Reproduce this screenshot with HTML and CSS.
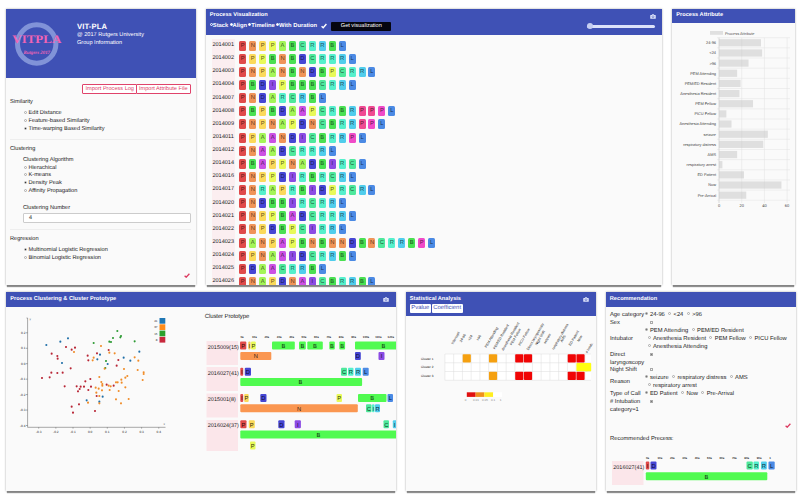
FILE: index.html
```html
<!DOCTYPE html>
<html lang="en">
<head>
<meta charset="utf-8">
<title>VIT-PLA</title>
<link rel="stylesheet" href="styles.css">
</head>
<body>
<main class="page">
  <div class="row row-top">
    <section class="card">
      <header class="brand">
        <svg class="logo" width="54" height="50" viewBox="10 19 54 50">
          <circle cx="36.7" cy="44" r="19.2" fill="none" stroke="#8193d8" stroke-width="5"/>
          <text class="logo-name" x="12.3" y="42.6" textLength="49" lengthAdjust="spacingAndGlyphs">VITPLA</text>
          <text class="logo-sub" x="23.5" y="54" textLength="26.5" lengthAdjust="spacingAndGlyphs">Rutgers 2017</text>
        </svg>
        <div class="brand-text">
          <h1>VIT-PLA</h1>
          <p>@ 2017 Rutgers University</p>
          <p>Group Information</p>
        </div>
      </header>
      <div class="settings">
        <div class="imports"><span class="import">Import Process Log</span><span class="import">Import Attribute File</span></div>
        <div class="group">Similarity</div>
        <div class="options">
          <div><i class="radio"></i>Edit Distance</div>
          <div><i class="radio"></i>Feature-based Similarity</div>
          <div><i class="radio on"></i>Time-warping Based Similarity</div>
        </div>
        <hr>
        <div class="group">Clustering</div>
        <div class="options">
          <div>Clustering Algorithm</div>
          <div><i class="radio"></i>Hierachical</div>
          <div><i class="radio"></i>K-means</div>
          <div><i class="radio on"></i>Density Peak</div>
          <div><i class="radio"></i>Affinity Propagation</div>
          <div class="number-label">Clustering Number</div>
          <div class="number">4</div>
        </div>
        <hr>
        <div class="group">Regression</div>
        <div class="options">
          <div><i class="radio on"></i>Multinomial Logistic Regression</div>
          <div><i class="radio"></i>Binomial Logistic Regression</div>
        </div>
        <svg class="tick" width="6" height="5" viewBox="0 0 6 5"><path d="M.6 2.7 2.2 4.2 5.4.8" fill="none" stroke="#dc3a60" stroke-width="1.3"/></svg>
      </div>
    </section>

    <section class="card">
      <header class="bar bar-vis">
        <div class="bar-line"><h2>Process Visualization</h2><svg class="camera" viewBox="0 0 12 10"><path d="M1.5 2H3.5L4.5 .5H7.5L8.500 2H10.500Q11.500 2 11.500 3V8.500Q11.500 9.500 10.500 9.500H1.500Q.5 9.500.5 8.500V3Q.5 2 1.500 2Z" fill="#dfe4fa"/><circle cx="6" cy="5.500" r="2" fill="none" stroke="#3f51b5" stroke-width="1"/></svg></div>
        <div class="bar-line modes">
          <span class="mode"><i class="ring"></i>Stack</span><span class="mode"><i class="ring full"></i>Align</span><span class="mode"><i class="ring full"></i>Timeline</span><span class="mode"><i class="ring full"></i>With Duration</span>
          <svg class="mode-tick" width="6" height="6" viewBox="0 0 6 6"><path d="M.6 3.200 2.200 4.800 5.400 1" fill="none" stroke="#fff" stroke-width="1.400"/></svg>
          <span class="get">Get visualization</span>
          <span class="slider"><i></i></span>
        </div>
      </header>
      <div class="traces" id="traces"></div>
    </section>

    <section class="card">
      <header class="bar"><div class="bar-line"><h2>Process Attribute</h2></div></header>
      <svg class="chart" id="attributes" width="123" height="262" viewBox="672 23 123 262"></svg>
    </section>
  </div>

  <div class="row row-bottom">
    <section class="card">
      <header class="bar"><div class="bar-line"><h2>Process Clustering &amp; Cluster Prototype</h2><svg class="camera" viewBox="0 0 12 10"><path d="M1.5 2H3.5L4.5 .5H7.5L8.500 2H10.500Q11.500 2 11.500 3V8.500Q11.500 9.500 10.500 9.500H1.500Q.5 9.500.5 8.500V3Q.5 2 1.500 2Z" fill="#dfe4fa"/><circle cx="6" cy="5.500" r="2" fill="none" stroke="#3f51b5" stroke-width="1"/></svg></div></header>
      <svg class="chart" id="clusters" width="389.5" height="185" viewBox="6 306 389.5 185"></svg>
    </section>

    <section class="card">
      <header class="bar bar-stat">
        <div class="bar-line"><h2>Statistical Analysis</h2><svg class="camera" viewBox="0 0 12 10"><path d="M1.5 2H3.5L4.5 .5H7.5L8.500 2H10.500Q11.500 2 11.500 3V8.500Q11.500 9.500 10.500 9.500H1.500Q.5 9.500.5 8.500V3Q.5 2 1.500 2Z" fill="#dfe4fa"/><circle cx="6" cy="5.500" r="2" fill="none" stroke="#3f51b5" stroke-width="1"/></svg></div>
        <div class="tabs"><span>Pvalue</span><span>Coefficient</span></div>
      </header>
      <svg class="chart" id="heatmap" width="190" height="175" viewBox="405.5 316 190 175"></svg>
    </section>

    <section class="card">
      <header class="bar"><div class="bar-line"><h2>Recommendation</h2></div></header>
      <div class="query">
        <div class="field"><b>Age category</b><div><p><i class="dot on"></i>24-96<i class="dot"></i>&lt;24<i class="dot"></i>&gt;96</p></div></div>
        <div class="field"><b>Sex</b><div><p class="box-line"><i class="box"></i></p></div></div>
        <div class="field"><b>Intubator</b><div>
          <p><i class="dot on"></i>PEM Attending<i class="dot"></i>PEM/ED Resident</p>
          <p class="in"><i class="dot"></i>Anesthesia Resident<i class="dot"></i>PEM Fellow<i class="dot"></i>PICU Fellow</p>
          <p class="in"><i class="dot"></i>Anesthesia Attending</p></div></div>
        <div class="field"><b>Direct<br>laryngoscopy</b><div class="top"><p class="box-line"><i class="box on"></i></p></div></div>
        <div class="field"><b>Night Shift</b><div><p class="box-line"><i class="box"></i></p></div></div>
        <div class="field"><b>Reason</b><div>
          <p><i class="dot on"></i>seizure<i class="dot"></i>respiratory distress<i class="dot"></i>AMS</p>
          <p class="in"><i class="dot"></i>respiratory arrest</p></div></div>
        <div class="field"><b>Type of Call</b><div><p><i class="dot on"></i>ED Patient<i class="dot"></i>Now<i class="dot"></i>Pre-Arrival</p></div></div>
        <div class="field"><b># Intubation<br>category=1</b><div class="top"><p class="box-line"><i class="box on"></i></p></div></div>
        <svg class="tick" width="6" height="5" viewBox="0 0 6 5"><path d="M.6 2.7 2.2 4.2 5.4.8" fill="none" stroke="#dc3a60" stroke-width="1.3"/></svg>
        <div class="result">Recommended Precess:</div>
      </div>
      <svg class="chart" id="recommended" width="190" height="47" viewBox="605.5 444 190 47"></svg>
    </section>
  </div>
</main>
<script src="app.js"></script>
</body>
</html>
```
FILE: styles.css
```css
* { box-sizing: border-box; }

body {
  margin: 0;
  background: #fff;
  color: #1a1a1a;
  font-family: "Liberation Sans", Arial, sans-serif;
  font-size: 5.650px;
  line-height: 7.600px;
  text-rendering: geometricPrecision;
}

h1, h2, p { margin: 0; }

.page {
  width: 800px;
  height: 500px;
  padding: 8.5px 4.5px 0 6px;
  overflow: hidden;
}

.row { display: grid; column-gap: 10px; }
.row-top { grid-template-columns: 189.5px 456.5px 123px; height: 276.5px; margin-bottom: 7px; }
.row-bottom { grid-template-columns: 389.5px 190px 190px; height: 199px; }

.card {
  display: flex;
  flex-direction: column;
  min-width: 0;
  min-height: 0;
  background: #fafafa;
  box-shadow: 0 3px 1px -1px rgba(0, 0, 0, .42), 0 0 2px rgba(0, 0, 0, .35);
}

.brand {
  display: flex;
  height: 69.500px;
  background: #3f51b5;
  color: #fff;
}
.logo { flex: none; margin: 10.500px 0 0 4px; }
.logo-name { font: bold 11.500px "Liberation Serif", serif; fill: #f064b4; }
.logo-sub { font: bold italic 5px "Liberation Serif", serif; fill: #f064b4; }
.brand-text { padding: 13.600px 0 0 13px; font-size: 5.600px; }
.brand-text h1 { font-size: 7.700px; line-height: 9px; margin-bottom: 1px; letter-spacing: .1px; }
.brand-text p { line-height: 7.800px; }

.settings { padding: 5.500px 5px 0 4px; }
.imports { display: flex; justify-content: flex-end; margin-bottom: 5.800px; }
.import {
  border: .8px solid #e0436b;
  height: 10px;
  line-height: 8.500px;
  padding: 0 2px;
  color: #e0436b;
  background: #fff;
  font-size: 5.600px;
  border-radius: 1px;
  white-space: nowrap;
}
.import + .import { margin-left: -1px; }
.options { padding: 3.600px 0 0 13px; }
.radio {
  display: inline-block;
  width: 3px;
  height: 3px;
  margin: 0 2px .2px .5px;
  border: .5px solid #aaa;
  border-radius: 50%;
  vertical-align: middle;
}
.radio.on { background: radial-gradient(#333 40%, #ccc 60%); }
hr { height: 1px; margin: 5.500px 0 6.300px; border: 0; background: #eee; }
.number-label { margin-top: 10.100px; }
.number {
  height: 10.500px;
  padding: 0 5px;
  line-height: 9px;
  border: 1px solid #ccc;
  border-radius: 1px;
  background: #fff;
  font-size: 5.500px;
}
.tick { display: block; margin: 10.500px 1px 0 auto; }

.bar { flex: none; height: 14.500px; padding: 3.900px 5px 0 4.300px; background: #3f51b5; color: #fff; }
.bar-vis { height: 26px; }
.bar-stat { height: 24px; }
.bar-line { display: flex; align-items: center; height: 7.500px; }
h2 { flex: 1; font-size: 5.650px; line-height: 7.500px; white-space: nowrap; }
.camera { width: 6px; height: 5px; margin-right: 1.500px; }
.modes { margin-top: 2.800px; font-weight: bold; font-size: 5.800px; }
.mode { margin-right: 1.300px; white-space: nowrap; }
.ring { display: inline-block; width: 3px; height: 3px; border: .7px solid #fff; border-radius: 50%; vertical-align: middle; margin-bottom: .5px; }
.ring.full { background: #fff; }
.mode-tick { margin: 0 4px 0 3px; }
.get {
  width: 60px;
  height: 9px;
  border-radius: 1px;
  background: #050510;
  font-size: 5.600px;
  font-weight: normal;
  line-height: 9px;
  text-align: center;
}
.slider { width: 68px; height: 2.500px; margin: 0 2px 0 auto; border-radius: 2px; background: #dce2fa; }
.slider i { display: block; width: 6px; height: 6px; margin-top: -2px; border-radius: 50%; background: #c5cef2; }

.traces { flex: 1; min-height: 0; padding: 4.600px 0 0 6px; overflow: hidden; }
.trace { display: flex; align-items: center; height: 13.130px; }
.trace-id {
  width: 23.500px;
  height: 100%;
  margin-right: 4.300px;
  background: #fbeef0;
  font-size: 5.550px;
  line-height: 13.600px;
  text-align: center;
}
.step {
  width: 7px;
  height: 10px;
  margin-right: 2.950px;
  border-radius: 1.500px;
  color: rgba(0, 0, 0, .68);
  font-size: 5.800px;
  line-height: 10.600px;
  text-align: center;
}

.tabs { display: flex; gap: 1px; margin-top: .3px; }
.tabs span { height: 9px; padding: 0 1.500px; background: #fff; border-radius: 1px; color: #3f51b5; font-size: 5.900px; line-height: 9.200px; }

.chart { display: block; flex: none; font-family: "Liberation Sans", Arial, sans-serif; }

.query { flex: none; height: 137.500px; padding: 5.200px 4px 0 4.500px; font-size: 5.800px; line-height: 7.950px; white-space: nowrap; }
.field { display: grid; grid-template-columns: 34px 1fr; align-items: center; }
.field b { font-weight: normal; }
.field .in { padding-left: 3px; }
.top { align-self: start; }
.box-line { padding-left: 5.500px; }
.dot { display: inline-block; width: 3px; height: 3px; margin: 0 2.500px 2px 3.200px; border: .5px solid #aaa; border-radius: 50%; vertical-align: middle; }
.dot:first-child { margin-left: .5px; }
.dot.on { background: #777; }
.box { display: inline-block; width: 3px; height: 3px; border: .5px solid #aaa; vertical-align: middle; }
.box.on { background: #777; }
.query .tick { margin-top: 7.500px; }
.result { margin-top: 8.500px; }
```
FILE: app.js
```js
const colors = {
  r: '#e04a4a', n: '#f09458', y: '#fbd95a', Y: '#e8fa58', a: '#a4f558', m: '#cc50e4',
  b: '#4ae052', c: '#4ee89c', t: '#55f0cc', s: '#50cdec', l: '#4b8ae4', d: '#4646d4',
  i: '#8c4be4', k: '#f04a92', q: '#f04ac8'
};

// Each trace: id, activity letters, colour keys.
const traces = [
  ['2014001', 'PNPPABCRRBL', 'rnyYabctsbl'],
  ['2014002', 'PPPBNBDCRRRL', 'ryYbnbdcttsl'],
  ['2014003', 'PNPANBNDBPCRRL', 'rnyanbndbYctsl'],
  ['2014004', 'PBDIPBBBCRRL', 'rbdiYbbbctsl'],
  ['2014007', 'PNDARCRBL', 'rndatcsbl'],
  ['2014008', 'PBPBDAAPCRBRPPPL', 'rbybdamYctbskkql'],
  ['2014009', 'PNPNAPDNCBRRPPL', 'rnynaYdncbtskql'],
  ['2014011', 'PPAANDICBRRPL', 'ryamndicbtsql'],
  ['2014012', 'PNAADCRRRL', 'rnmadcttsl'],
  ['2014014', 'PBAPPNADBIRCL', 'rbmyYnadbitcl'],
  ['2014016', 'PNPPDIRBRCRL', 'rnyYditbtcsl'],
  ['2014017', 'PNRAPRBIDPRCRL', 'rntaytbidYtcsl'],
  ['2014020', 'PNDBBIRCRRL', 'rndbbitctsl'],
  ['2014021', 'PNPPBADCRRRL', 'rnyYbmdcttsl'],
  ['2014022', 'PNPDBPCIRRL', 'rnydbYcitsl'],
  ['2014023', 'PANPAPBNBNNDBNCRRBPL', 'ranymYbnbnndbnctsbql'],
  ['2014024', 'PPNAAIDCRRBL', 'rynamidctsbl'],
  ['2014025', 'PDAACRRBL', 'rdamctsbl'],
  ['2014026', 'PNAPDNAICBRRBL', 'rnaydnmicbtsbl']
];
document.getElementById('traces').innerHTML = traces.map(([id, letters, keys]) =>
  `<div class="trace"><span class="trace-id">${id}</span>` +
  [...letters].map((ch, i) => `<span class="step" style="background:${colors[keys[i]]}">${ch}</span>`).join('') +
  '</div>').join('');

const esc = s => String(s).replace(/</g, '&lt;').replace(/>/g, '&gt;');
const text = (x, y, s, size, fill = '#222', anchor = 'start', extra = '') =>
  `<text x="${x}" y="${y}" font-size="${size}" fill="${fill}" text-anchor="${anchor}" ${extra}>${esc(s)}</text>`;
const rect = (x, y, w, h, fill, extra = '') =>
  `<rect x="${x}" y="${y}" width="${w}" height="${h}" fill="${fill}" ${extra}/>`;
const line = (x1, y1, x2, y2, stroke, w = 0.5) =>
  `<path d="M${x1} ${y1}L${x2} ${y2}" stroke="${stroke}" stroke-width="${w}" fill="none"/>`;

// Process attribute bars
{
  const rows = [['24-96', 37], ['<24', 38], ['>96', 26], ['PEM Attending', 16], ['PEM/ED Resident', 19],
    ['Anesthesia Resident', 18], ['PEM Fellow', 30], ['PICU Fellow', 6.5], ['Anesthesia Attending', 11],
    ['seizure', 43], ['respiratory distress', 39], ['AMS', 16], ['respiratory arrest', 3],
    ['ED Patient', 22], ['Now', 55], ['Pre-Arrival', 24]];
  const x0 = 719, unit = 1.135, pitch = 10.16, top = 37.7;
  let out = rect(710, 31, 13, 3.8, '#e0e0e0') + text(725, 34.7, 'Process Attribute', 3.9, '#555', 'start', 'textLength="29.500"');
  for (let i = 0; i <= 16; i++) out += line(717, top + i * pitch, 790, top + i * pitch, '#e2e2e2');
  for (let v = 0; v <= 60; v += 20) {
    const x = x0 + v * unit;
    out += line(x, top, x, 203, v ? '#e0e0e0' : '#bbb') + text(x, 207, v, 4, '#444', 'middle');
  }
  rows.forEach(([name, v], i) => {
    const y = top + pitch * (i + .5);
    out += text(716, y + 1.4, name, 3.9, '#444', 'end') + rect(x0, y - 3.6, v * unit, 7.2, '#c8c8c8', 'fill-opacity=".55"');
  });
  document.getElementById('attributes').innerHTML = out;
}

// Timeline pieces: [x, y, width, letter, colour, letter x (optional)]
const blocks = list => list.map(([x, y, w, ch, fill, tx]) =>
  rect(x, y, w, 8, fill, 'rx="1"') + text(tx || x + w / 2, y + 6.3, ch, 5.8, 'rgba(0,0,0,.85)', 'middle')).join('');
const G = '#50fa50', N = '#fa9650';
const ticks = (x0, y, labels) => labels.map((s, i) => text(x0 + i * 12.4, y, s, 2.9, '#222', 'middle', 'font-weight="bold"')).join('');

// Scatter plot and cluster prototypes
{
  const scale = [
    ['#1f6fa8', '139,177 181,167 204,157 186,231 300,206 292,220 371,215 391,224 418,197 308,332 298,347 260,343 323,234'],
    ['#2c9a33', '352,135 339,156 363,150 361,154 328,167 333,168 281,171 404,166 318,225 316,246'],
    ['#b82535', '198,183 225,185 215,191 155,203 172,210 173,218 212,247 154,260 172,261 188,260 149,274 126,276 194,301 230,301 242,302 252,302 239,309 234,316 265,312 273,302 256,286 271,279 263,209 265,223 291,202 326,192 355,222 350,239 320,296 341,299 290,330 237,355 215,362 219,380 285,375'],
    ['#f08c28', '222,198 303,180 281,215 278,223 328,200 344,202 404,214 415,224 372,249 413,252 431,259 431,264 428,282 298,273 304,288 307,294 307,299 287,305 296,308 306,313 289,320 298,330 326,299 332,301 329,312 348,289 353,289 364,281 365,290 376,275 382,270 376,304 356,315 348,340 363,352 386,339 264,350 298,352 314,248']
  ];
  let out = line(27.6, 317, 27.6, 426.3, '#555') + line(27.6, 426.3, 165.5, 426.3, '#555');
  ['0.2', '0.1', '0.0', '-0.1', '-0.2', '-0.3', '-0.4'].forEach((s, i) => {
    const y = 331.8 + i * 15.45;
    out += line(26, y, 27.6, y, '#555') + text(25.500, y + 1, s, 3.2, '#222', 'end');
  });
  ['-0.3', '-0.2', '-0.1', '0.0', '0.1', '0.2', '0.3', '0.4'].forEach((s, i) => {
    const x = 38.7 + i * 17.15;
    out += line(x, 426.3, x, 427.6, '#555') + text(x, 431.6, s, 3.2, '#222', 'middle');
  });
  out += line(26.5, 317, 27.6, 317, '#555') + text(29.6, 319, 'y', 2.8, '#333') + text(163.500, 424, 'x', 3, '#333');
  scale.forEach(([fill, pts]) => pts.split(' ').forEach(p => {
    const [x, y] = p.split(',').map(v => v / 3);
    out += `<circle cx="${x}" cy="${y + 285}" r="1.050" fill="${fill}"/>`;
  }));
  [['#1f77b4', '41'], ['#ff8c1a', '37'], ['#2ca02c', '15'], ['#c8283c', '8']].forEach(([c, s], i) => {
    const y = 317 + i * 6.3;
    out += rect(159.500, y, 5.800, 5.700, c) + text(157.500, y + 4, s, 3, '#333', 'end');
  });
  out += text(204.800, 316.800, 'Cluster Prototype', 6, '#222', 'start', 'textLength="44.500"');
  out += ticks(242, 337, ['0s', '10s', '20s', '30s', '40s', '50s', '60s', '70s', '80s', '90s', '100s', '110s', '120s']);
  [[340, 24], [366, 24], [392.5, 24], [419, 31]].forEach(([y, h]) => out += rect(206.5, y, 31.5, h, '#fbe6ea'));
  ['2015009(15)', '2016027(41)', '2015001(8)', '2016024(37)'].forEach((s, i) =>
    out += text(207.800, 347.8 + i * 26.2, s, 5.5, '#222', 'start', `textLength="${i === 2 ? 28 : 31}" lengthAdjust="spacingAndGlyphs"`));
  out += blocks([
    [240, 340.5, 6.3, 'P', colors.r], [248.3, 340.5, 2.2, 'I', '#f8c850'], [251, 340.5, 4.800, 'P', colors.Y],
    [272, 340.5, 22.800, 'B', G], [299, 340.5, 6.800, 'B', G], [307.300, 340.500, 15.500, 'B', G],
    [329.300, 340.500, 5.500, 'B', G], [339.300, 340.500, 5.800, 'B', G], [355, 340.500, 42, 'B', G, 383.500],
    [240.300, 351, 31, 'N', N], [355, 351, 5.800, 'D', colors.d], [378.500, 351, 6, 'I', colors.i],
    [240.300, 366.700, 2.900, 'I', colors.r], [244.800, 366.700, 6.200, 'D', colors.d],
    [341, 366.700, 6, 'C', colors.c], [348, 366.700, 5.500, 'R', colors.t], [355, 366.700, 6, 'R', colors.s], [362.700, 366.700, 6, 'L', colors.l],
    [240.300, 377, 121.800, 'B', G, 300.5],
    [240.300, 393, 2.900, 'I', colors.r], [244.200, 393, 4.500, 'P', colors.y], [260.300, 393, 6.200, 'D', colors.d],
    [336.500, 393, 5.500, 'P', colors.Y], [358, 393, 28.500, 'B', G], [387.500, 393, 5.500, 'L', colors.l],
    [240.300, 403.300, 117.500, 'N', N], [366, 403.300, 5.500, 'C', colors.c], [372, 403.300, 2.500, 'I', colors.t], [375, 403.300, 5, 'R', colors.s],
    [240.300, 419.200, 6.200, 'P', colors.r], [248.800, 419.200, 6, 'P', colors.y], [278.300, 419.200, 6.200, 'D', colors.d],
    [294.700, 419.200, 6.200, 'I', colors.i], [383.500, 419.200, 5.500, 'C', colors.c], [392.800, 419.200, 5, 'I', colors.s, 394.500],
    [240.300, 429.600, 157, 'B', G, 318.500], [250, 440.500, 5.500, 'P', colors.Y]
  ]);
  document.getElementById('clusters').innerHTML = out;
}

// P-value heatmap
{
  const x0 = 444.4, y0 = 354, w = 8.75, h = 8.75, end = 590.5;
  let out = rect(x0, y0, end - x0, h * 3, '#fff');
  for (let i = 0; i <= 16; i++) out += line(x0 + i * w, y0, x0 + i * w, y0 + 3 * h, '#dcdcdc');
  for (let i = 0; i <= 3; i++) out += line(x0, y0 + i * h, end, y0 + i * h, '#dcdcdc');
  const cell = (c, r, fill) => out += rect(x0 + c * w + .3, y0 + r * h + .3, (c === 16 ? 6 : w - .6), h - .6, fill, 'rx=".8"');
  [0, 2].forEach(r => [8, 9, 14, 15].forEach(c => cell(c, r, '#f00505')));
  [[2, 0], [5, 0], [5, 2]].forEach(([c, r]) => cell(c, r, '#f5a010'));
  cell(15, 1, '#ffff10'); cell(16, 1, '#ffff10');
  out += rect(583, y0 + h + .3, 4, h - .6, '#ffff10');
  ['Cluster 1', 'Cluster 2', 'Cluster 3'].forEach((s, i) => out += text(420.500, 359.600 + i * h, s, 3.100, '#222'));
  const labels = [['Intercept', 344.5], ['24-96', 342.5], ['<24', 341], ['>96', 341], ['PEM Attending', 348],
    ['PEM/ED Resident', 349.5], ['Anesthesia Resident', 351], ['PEM Fellow', 345.5], ['PICU Fellow', 346],
    ['Direct laryngoscopy', 350.5], ['Night Shift', 345.5], ['seizure', 344], ['respiratory distress', 350],
    ['AMS', 342.5], ['ED Patient', 346], ['Now', 342], ['# Intub.', 353.5]];
  labels.forEach(([s, y], i) => {
    const x = 452.500 + i * 8.400;
    out += text(x, y, s, 3.500, '#222', 'start', `transform="rotate(-60 ${x} ${y})"`);
  });
  ['#e01010', '#f0901c', '#ffee20', '#fff'].forEach((c, i) => out += rect(466.300 + i * 8.800, 392.300, 8.800, 4.600, c));
  [['0', 465], ['0.01', 475.500], ['0.05', 484.500], ['0.1', 492.500], ['1', 500]].forEach(([s, x]) => out += text(x, 401.300, s, 3, '#888', 'middle'));
  document.getElementById('heatmap').innerHTML = out;
}

// Recommended process timeline
document.getElementById('recommended').innerHTML =
  ticks(647, 458.500, ['0s', '10s', '20s', '30s', '40s', '50s', '60s', '70s', '80s', '90s']) +
  text(769.500, 458.500, '1', 3, '#222', 'middle', 'font-weight="bold"') +
  rect(611.500, 461, 31.500, 24, '#fbe6ea') + text(612.800, 469.300, '2016027(41)', 5.5, '#222', 'start', 'textLength="31" lengthAdjust="spacingAndGlyphs"') +
  blocks([
    [645.300, 461.500, 3.500, 'I', colors.r], [650, 461.500, 6, 'D', colors.d],
    [746, 461.500, 6.300, 'C', colors.c], [753, 461.500, 5.500, 'R', colors.t], [760.500, 461.500, 5.800, 'R', colors.s], [768, 461.500, 6.200, 'L', colors.l],
    [645.300, 472.300, 121.500, 'B', G]
  ]);
```
